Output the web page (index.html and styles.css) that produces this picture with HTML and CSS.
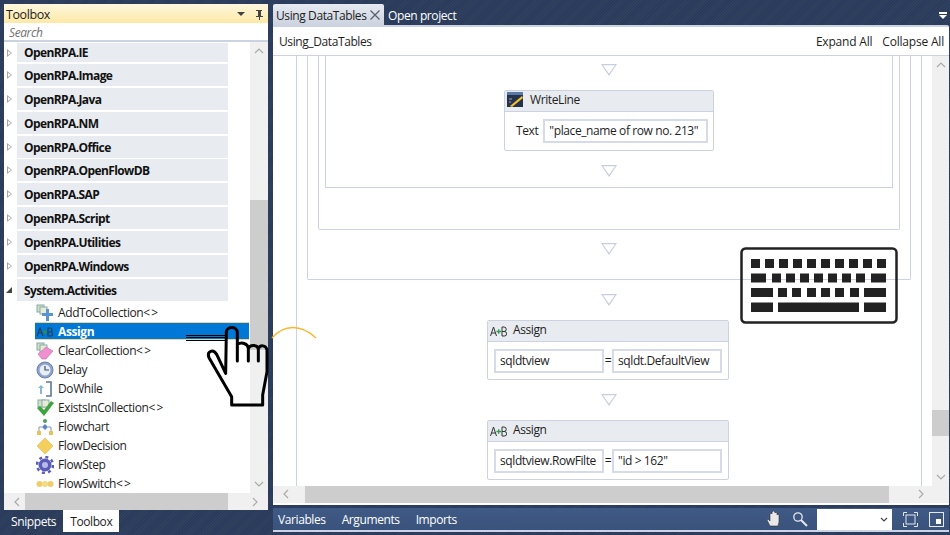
FILE: index.html
```html
<!DOCTYPE html>
<html lang="en">

<head>
    <meta charset="UTF-8">
    <title>Using DataTables</title>
    <link rel="stylesheet" href="styles.css">
</head>

<body>
    <div class="app">
        <!-- toolbox side -->
        <div class="left">
            <div class="toolbox">
                <div class="toolbox-title">
                    <span>Toolbox</span>
                    <svg class="title-icons" width="28" height="12" viewBox="0 0 28 12">
                        <path d="M0 3h8l-4 4z" fill="#444"/>
                        <path d="M19 1h6v1h-1v5h2v1h-3v3h-1v-3h-3v-1h2v-5h-2z" fill="#444"/>
                    </svg>
                </div>
                <div class="search">Search</div>
                <div class="tree-wrap">
                    <div class="tree">
                        <div class="cat"><i class="arrow"></i><b>OpenRPA.IE</b></div>
                        <div class="cat"><i class="arrow"></i><b>OpenRPA.Image</b></div>
                        <div class="cat"><i class="arrow"></i><b>OpenRPA.Java</b></div>
                        <div class="cat"><i class="arrow"></i><b>OpenRPA.NM</b></div>
                        <div class="cat"><i class="arrow"></i><b>OpenRPA.Office</b></div>
                        <div class="cat"><i class="arrow"></i><b>OpenRPA.OpenFlowDB</b></div>
                        <div class="cat"><i class="arrow"></i><b>OpenRPA.SAP</b></div>
                        <div class="cat"><i class="arrow"></i><b>OpenRPA.Script</b></div>
                        <div class="cat"><i class="arrow"></i><b>OpenRPA.Utilities</b></div>
                        <div class="cat"><i class="arrow"></i><b>OpenRPA.Windows</b></div>
                        <div class="cat"><i class="arrow open"></i><b>System.Activities</b></div>
                        <ul class="items">
                            <li>
                                <svg width="18" height="18" viewBox="0 0 18 18"><rect x="1" y="1" width="7" height="7" fill="#cfe3c4" stroke="#8aa"/><rect x="4" y="3" width="7" height="7" fill="#e6edd2" stroke="#8aa"/><path d="M10 5h3v4h4v3h-4v5h-3v-5H6V9h4z" fill="#5b93d3"/></svg>
                                <span>AddToCollection&lt;&thinsp;&gt;</span>
                            </li>
                            <li class="selected">
                                <svg width="18" height="14" viewBox="0 0 18 14"><path d="M1 11l3-8 3 8M2.200 8h3.600M12 3v8h2.500a2 2 0 0 0 0-4H12h2a2 2 0 0 0 0-4z" fill="none" stroke="#2a3f56" stroke-width="1.200"/><path d="M7 7h4M9 5v4" stroke="#2d8f4a" stroke-width="1.400"/></svg>
                                <span>Assign</span>
                            </li>
                            <li>
                                <svg width="18" height="18" viewBox="0 0 18 18"><rect x="1" y="1" width="7" height="7" fill="#cfe3c4" stroke="#8aa"/><rect x="4" y="3" width="7" height="7" fill="#e6edd2" stroke="#8aa"/><path d="M2 12l8-7 7 4-7 8H6z" fill="#ee8fd0" stroke="#c46aa8" stroke-width=".6"/></svg>
                                <span>ClearCollection&lt;&thinsp;&gt;</span>
                            </li>
                            <li>
                                <svg width="18" height="18" viewBox="0 0 18 18"><circle cx="9" cy="9" r="8" fill="#8aa3cf" stroke="#6b82aa"/><circle cx="9" cy="9" r="5.500" fill="#e8edf5"/><path d="M9 5v4h4" fill="none" stroke="#3d4f70" stroke-width="1.200"/></svg>
                                <span>Delay</span>
                            </li>
                            <li>
                                <svg width="18" height="18" viewBox="0 0 18 18"><path d="M10 2h5v14h-5" fill="none" stroke="#5f7596" stroke-width="1.600"/><path d="M5 5l3 3H6v6H4V8H2z" fill="#8cb8d8"/></svg>
                                <span>DoWhile</span>
                            </li>
                            <li>
                                <svg width="18" height="18" viewBox="0 0 18 18"><rect x="2" y="1" width="7" height="7" fill="#cfe3c4" stroke="#8aa"/><rect x="6" y="1" width="7" height="7" fill="#e6edd2" stroke="#8aa"/><path d="M1 9l3-2 4 4 7-9 3 2-10 13z" fill="#3fa33f"/></svg>
                                <span>ExistsInCollection&lt;&thinsp;&gt;</span>
                            </li>
                            <li>
                                <svg width="18" height="18" viewBox="0 0 18 18"><circle cx="9" cy="3" r="2" fill="#4aa05a"/><path d="M9 6l3 3-3 3-3-3z" fill="#5d86c6"/><path d="M3 13v-4h3M15 13v-4h-3" fill="none" stroke="#8899aa"/><rect x="1" y="13" width="4" height="4" fill="#e6c35a"/><rect x="13" y="13" width="4" height="4" fill="#e6c35a"/></svg>
                                <span>Flowchart</span>
                            </li>
                            <li>
                                <svg width="18" height="18" viewBox="0 0 18 18"><path d="M9 1l8 8-8 8-8-8z" fill="#f5cf5e" stroke="#e0b84a" stroke-width=".6"/></svg>
                                <span>FlowDecision</span>
                            </li>
                            <li>
                                <svg width="18" height="18" viewBox="0 0 18 18"><circle cx="9" cy="9" r="6.500" fill="#5a5db8"/><circle cx="9" cy="9" r="8" fill="none" stroke="#5a5db8" stroke-width="2.500" stroke-dasharray="3 3.300"/><circle cx="9" cy="9" r="3" fill="#b8bbea"/></svg>
                                <span>FlowStep</span>
                            </li>
                            <li>
                                <svg width="18" height="18" viewBox="0 0 18 18"><circle cx="3.500" cy="9" r="3" fill="#f0cd6a"/><circle cx="9" cy="9" r="3" fill="#f5da84"/><circle cx="14.500" cy="9" r="3" fill="#f0cd6a"/></svg>
                                <span>FlowSwitch&lt;&thinsp;&gt;</span>
                            </li>
                        </ul>
                    </div>
                    <div class="vscroll tree-scroll">
                        <svg class="chev" width="10" height="6" viewBox="0 0 10 6"><path d="M1 5l4-4 4 4" fill="none" stroke="#aaa" stroke-width="1.200"/></svg>
                        <div class="vthumb"></div>
                        <svg class="chev" width="10" height="6" viewBox="0 0 10 6"><path d="M1 1l4 4 4-4" fill="none" stroke="#aaa" stroke-width="1.200"/></svg>
                    </div>
                </div>
                <div class="hscroll tree-h">
                    <svg class="chev" width="6" height="10" viewBox="0 0 6 10"><path d="M5 1L1 5l4 4" fill="none" stroke="#aaa" stroke-width="1.200"/></svg>
                    <div class="hthumb"></div>
                    <svg class="chev" width="6" height="10" viewBox="0 0 6 10"><path d="M1 1l4 4-4 4" fill="none" stroke="#aaa" stroke-width="1.200"/></svg>
                </div>
            </div>
            <div class="side-tabs">
                <span class="side-tab">Snippets</span>
                <span class="side-tab active">Toolbox</span>
            </div>
        </div>

        <!-- designer side -->
        <div class="right">
            <div class="doc-tabs">
                <div class="doc-tab active">Using DataTables
                    <svg width="12" height="12" viewBox="0 0 12 12"><path d="M1.500 1.500l9 9M10.500 1.500l-9 9" stroke="#5a6270" stroke-width="1.300"/></svg>
                </div>
                <div class="doc-tab">Open project</div>
                <svg class="tab-menu" width="10" height="10" viewBox="0 0 10 10"><path d="M1 1h8v2H1zM1 4h8L5 8z" fill="#fff"/></svg>
            </div>
            <div class="designer">
                <div class="breadcrumb">
                    <span>Using_DataTables</span>
                    <div class="expand"><span>Expand All</span><span>Collapse All</span></div>
                </div>
                <div class="canvas-row">
                    <div class="canvas">
                        <div class="box box1">
                            <div class="box box2">
                                <div class="box box3">
                                    <div class="box box4">
                                        <i class="drop"></i>
                                        <div class="card write">
                                            <div class="card-head">
                                                <svg width="17" height="17" viewBox="0 0 17 17"><rect x="0" y="1" width="16" height="15" fill="#26324a"/><path d="M0 1h16v3H0z" fill="#5a78a8"/><path d="M3 15L15 5l1 2L5 16z" fill="#f2c230"/><path d="M2 8h3M2 11h2" stroke="#9ab" stroke-width="1"/></svg>
                                                <span>WriteLine</span>
                                            </div>
                                            <div class="card-body">
                                                <span>Text</span>
                                                <div class="field wide">"place_name of row no. 213"</div>
                                            </div>
                                        </div>
                                        <i class="drop last"></i>
                                    </div>
                                </div>
                                <i class="drop mid"></i>
                            </div>
                            <i class="drop"></i>
                            <div class="card">
                                <div class="card-head">
                                    <svg class="ab" width="17" height="12" viewBox="0 0 17 12"><path d="M.5 11l3-9 3 9M1.600 8h3.800M12 2v9h2.400a2.200 2.200 0 0 0 0-4.500H12h2a2.200 2.200 0 0 0 0-4.500z" fill="none" stroke="#333" stroke-width="1"/><path d="M6.500 6.500h4.500M8.700 4.300v4.400" stroke="#2d9a4e" stroke-width="1.300"/></svg>
                                    <span>Assign</span>
                                </div>
                                <div class="card-body assign">
                                    <div class="field">sqldtview</div><span>=</span><div class="field">sqldt.DefaultView</div>
                                </div>
                            </div>
                            <i class="drop gap"></i>
                            <div class="card">
                                <div class="card-head">
                                    <svg class="ab" width="17" height="12" viewBox="0 0 17 12"><path d="M.5 11l3-9 3 9M1.600 8h3.800M12 2v9h2.400a2.200 2.200 0 0 0 0-4.500H12h2a2.200 2.200 0 0 0 0-4.500z" fill="none" stroke="#333" stroke-width="1"/><path d="M6.500 6.500h4.500M8.700 4.300v4.400" stroke="#2d9a4e" stroke-width="1.300"/></svg>
                                    <span>Assign</span>
                                </div>
                                <div class="card-body assign">
                                    <div class="field">sqldtview.RowFilte</div><span>=</span><div class="field">"id &gt; 162"</div>
                                </div>
                            </div>
                        </div>
                    </div>
                    <div class="vscroll canvas-scroll">
                        <svg class="chev" width="10" height="6" viewBox="0 0 10 6"><path d="M1 5l4-4 4 4" fill="none" stroke="#aaa" stroke-width="1.200"/></svg>
                        <div class="vthumb"></div>
                        <svg class="chev" width="10" height="6" viewBox="0 0 10 6"><path d="M1 1l4 4 4-4" fill="none" stroke="#aaa" stroke-width="1.200"/></svg>
                    </div>
                </div>
                <div class="hscroll canvas-h">
                    <svg class="chev" width="6" height="10" viewBox="0 0 6 10"><path d="M5 1L1 5l4 4" fill="none" stroke="#aaa" stroke-width="1.200"/></svg>
                    <div class="hthumb"></div>
                    <svg class="chev" width="6" height="10" viewBox="0 0 6 10"><path d="M1 1l4 4-4 4" fill="none" stroke="#aaa" stroke-width="1.200"/></svg>
                </div>
            </div>
            <div class="statusbar">
                <span>Variables</span>
                <span>Arguments</span>
                <span>Imports</span>
                <div class="status-tools">
                    <svg class="pan" width="16" height="16" viewBox="0 0 16 16"><path d="M4 15L1 9l1-1 2 2V3l1-1 1 1V1l1.500-1L9 1v1l1-1 1 1v2l1-1 1 1v7l-1 4z" fill="#e8e8e8" stroke="#333" stroke-width=".6"/></svg>
                    <svg width="16" height="16" viewBox="0 0 16 16"><circle cx="6" cy="6" r="4.200" fill="none" stroke="#e4e8f0" stroke-width="1.300"/><path d="M9 9l6 6" stroke="#e4e8f0" stroke-width="2"/></svg>
                    <div class="zoom-box">
                        <svg width="8" height="5" viewBox="0 0 8 5"><path d="M1 1l3 3 3-3" fill="none" stroke="#444" stroke-width="1.200"/></svg>
                    </div>
                    <svg class="fit" width="15" height="15" viewBox="0 0 15 15"><rect x="3" y="3" width="9" height="9" fill="none" stroke="#e4e8f0"/><path d="M.5 4V.5H4M11 .5h3.500V4M.5 11v3.500H4M11 14.500h3.500V11" fill="none" stroke="#e4e8f0"/></svg>
                    <svg class="fit" width="15" height="15" viewBox="0 0 15 15"><rect x=".5" y=".5" width="14" height="14" fill="none" stroke="#e4e8f0"/><rect x="7" y="7" width="5" height="5" fill="#fff"/></svg>
                </div>
            </div>
        </div>

        <!-- callouts drawn over the screen -->
        <div class="press-lines"></div>
        <svg class="hand" width="140" height="100" viewBox="0 0 420 300">
            <path d="M137 175L139 52C140 33 170 33 172 52V88C185 80 203 85 205 100C210 88 232 88 235 102C240 88 258 90 261 105V170L248 240V270H155V245L87 128C80 110 98 100 110 118L137 175M172 85V138M205 100V138M235 102V138" fill="none" stroke="#000" stroke-width="9" stroke-linejoin="round" stroke-linecap="round"/>
        </svg>
        <svg class="arc" width="46" height="14" viewBox="0 0 46 14">
            <path d="M1 12C13 -2 30 -2 45 12" fill="none" stroke="#fbb72c" stroke-width="1.300"/>
        </svg>
        <svg class="keyboard" width="158" height="77" viewBox="0 0 158 77" fill="#222">
            <rect x="1.500" y="1.500" width="155" height="74" rx="4" fill="none" stroke="#222" stroke-width="2.500"/>
            <path d="M11 12h9v9h-9zM25 12h9v9h-9zM39 12h9v9h-9zM53 12h9v9h-9zM67 12h9v9h-9zM81 12h9v9h-9zM95 12h9v9h-9zM109 12h9v9h-9zM123 12h9v9h-9zM137 12h9v9h-9z"/>
            <path d="M11 26.500h15v9H11zM32 26.500h9v9h-9zM46 26.500h9v9h-9zM60 26.500h9v9h-9zM74 26.500h9v9h-9zM88 26.500h9v9h-9zM102 26.500h9v9h-9zM116 26.500h9v9h-9zM131 26.500h15v9h-15z"/>
            <path d="M11 41h22v9H11zM38 41h9v9h-9zM52 41h9v9h-9zM67 41h9v9h-9zM81 41h9v9h-9zM95 41h9v9h-9zM110 41h9v9h-9zM124 41h22v9h-22z"/>
            <path d="M11 55.500h22v9.500H11zM38 55.500h81v9.500H38zM124 55.500h22v9.500h-22z"/>
        </svg>
    </div>
</body>

</html>
```

FILE: styles.css
```css
* {
    box-sizing: border-box;
}

body {
    margin: 0;
    font-family: "Open Sans", "Noto Sans", sans-serif;
    font-size: 12px;
    letter-spacing: -0.4px;
    color: #1e1e1e;
    background-color: #2b3b5c;
}

.app {
    position: relative;
    display: flex;
    width: 950px;
    height: 535px;
    padding: 4px 1px 3px 4px;
    gap: 5px;
    overflow: hidden;
    background: repeating-linear-gradient(135deg, #2a3a5a 0, #2a3a5a 1px, #30405f 1px, #30405f 2px);
}

/* toolbox */
.left {
    display: flex;
    flex-direction: column;
    width: 264px;
}

.toolbox {
    display: flex;
    flex-direction: column;
    height: 506px;
    background-color: #fff;
    border-radius: 2px 2px 0 0;
}

.toolbox-title {
    display: flex;
    align-items: center;
    justify-content: space-between;
    height: 19px;
    padding: 2px 3px 0 2px;
    font-size: 12.500px;
    background: linear-gradient(#fdf7df, #fde9a6);
}

.search {
    height: 18px;
    margin-top: 1px;
    padding: 1px 5px 0;
    line-height: 16px;
    font-style: italic;
    color: #717171;
    border-bottom: 2px solid #ccd2e0;
}

.tree-wrap {
    display: flex;
    height: 451px;
}

.tree {
    flex: 1;
    padding-top: 1px;
    overflow: hidden;
}

.cat {
    display: flex;
    align-items: center;
    height: 22px;
    margin: 0 0 2px 13px;
    width: 211px;
    padding-left: 7px;
    position: relative;
    background-color: #e8ebef;
}

.cat:first-child {
    height: 19px;
    padding-bottom: 1px;
}

/* the list is one pixel short here in the real control */
.cat:nth-child(5) {
    margin-bottom: 1px;
}

.cat b {
    font-weight: 700;
    letter-spacing: -0.6px;
    color: #111;
}

.arrow {
    position: absolute;
    left: -10px;
    top: 50%;
    margin-top: -4px;
    border-left: 5px solid #a6a6a6;
    border-top: 4px solid transparent;
    border-bottom: 4px solid transparent;
}

/* white centre makes the closed arrow hollow */
.arrow::after {
    content: "";
    position: absolute;
    left: -4px;
    top: -2px;
    border-left: 3px solid #fff;
    border-top: 2px solid transparent;
    border-bottom: 2px solid transparent;
}

.arrow.open {
    left: -11px;
    margin-top: -3px;
    border: 0;
    border-right: 6px solid #444;
    border-top: 6px solid transparent;
}

.arrow.open::after {
    display: none;
}

.items {
    margin: 0;
    padding: 0 0 0 31px;
    list-style: none;
}

.items li {
    display: flex;
    align-items: center;
    gap: 4px;
    height: 19px;
    padding-left: 1px;
}

.items li svg {
    flex: none;
    width: 18px;
}

.items li.selected {
    height: 18px;
    margin-bottom: 1px;
    margin-right: 1px;
    padding-top: 1px;
    color: #fff;
    font-weight: 700;
    background-color: #0078d7;
    border: 1px solid #f2d58b;
    border-width: 1px 0;
}

/* scrollbars */
.vscroll {
    display: flex;
    flex-direction: column;
    align-items: center;
    width: 18px;
    background-color: #f0f0f0;
    position: relative;
}

.hscroll {
    display: flex;
    align-items: center;
    height: 17px;
    background-color: #f0f0f0;
}

.vscroll .chev:first-child {
    margin-top: 6px;
}

.vscroll .chev:last-child {
    position: absolute;
    bottom: 6px;
}

.vthumb {
    position: absolute;
    left: 0;
    width: 100%;
    background-color: #cdcdcd;
}

.tree-scroll .vthumb {
    top: 158px;
    height: 150px;
}

.canvas-scroll .vthumb {
    top: 354px;
    height: 26px;
}

.hthumb {
    height: 100%;
    background-color: #cdcdcd;
}

.tree-h {
    justify-content: space-between;
    padding: 0 10px;
    height: 17px;
}

.tree-h .hthumb {
    width: 203px;
    margin-left: -1px;
    margin-right: 18px;
}

.side-tabs {
    display: flex;
    align-items: center;
    height: 22px;
    color: #fff;
}

.side-tab {
    height: 22px;
    padding: 3px 7px;
}

.side-tab.active {
    color: #1e1e1e;
    background-color: #fff;
}

/* designer */
.right {
    flex: 1;
    display: flex;
    flex-direction: column;
    min-width: 0;
}

.doc-tabs {
    display: flex;
    height: 21px;
    color: #fff;
    position: relative;
}

.doc-tab {
    display: flex;
    align-items: center;
    gap: 2px;
    padding: 2px 3px 0;
    white-space: nowrap;
}

.doc-tab.active {
    width: 111px;
    margin-right: 1px;
    color: #1e1e1e;
    background: linear-gradient(#e6eaf1, #ccd3e0);
    border-radius: 2px 2px 0 0;
}

.tab-menu {
    position: absolute;
    right: 1px;
    top: 7px;
}

.designer {
    height: 481px;
    background-color: #fff;
    border-top: 2px solid #ccd3e0;
    border-radius: 0 2px 0 0;
}

.breadcrumb {
    display: flex;
    align-items: center;
    justify-content: space-between;
    height: 29px;
    padding: 2px 5px 0 6px;
    border-bottom: 1px solid #ccd2e0;
}

.expand {
    display: flex;
    gap: 10px;
    letter-spacing: -0.2px;
}

.canvas-row {
    display: flex;
    height: 430px;
}

.canvas {
    flex: 1;
    padding: 0 10px 0 23px;
    overflow: hidden;
}

.canvas-scroll {
    width: 17px;
}

.box {
    display: flex;
    flex-direction: column;
    align-items: center;
    border: 1px solid #ccd2e6;
    border-top: 0;
}

.box1 {
    height: 430px;
    padding: 0 10px;
    border-bottom: 0;
}

.box2 {
    width: 604px;
    height: 224px;
    padding: 0 10px;
    border-radius: 0 0 2px 2px;
}

.box3 {
    width: 582px;
    height: 174px;
    padding: 0 6px;
    flex: none;
    border-radius: 0 0 2px 2px;
}

.box4 {
    width: 568px;
    height: 132px;
    flex: none;
}

.drop {
    flex: none;
    width: 16px;
    height: 12px;
    margin-top: 14px;
    position: relative;
    clip-path: polygon(0 0, 100% 0, 50% 100%);
    background-color: #c5cede;
}

.drop::after {
    content: "";
    position: absolute;
    left: 2px;
    top: 1.300px;
    width: 12px;
    height: 8.500px;
    clip-path: polygon(0 0, 100% 0, 50% 100%);
    background-color: #fff;
}

.box4 .drop:first-child {
    margin-top: 8px;
}

.drop.mid {
    margin-top: 13px;
}

.card {
    flex: none;
    width: 242px;
    height: 60px;
    margin-top: 14px;
    margin-right: 2px;
    border: 1px solid #ccd2e0;
    border-radius: 2px;
    background-color: #fff;
}

.card.write {
    width: 210px;
    height: 61px;
    margin-right: 0;
}

.card-head {
    display: flex;
    align-items: center;
    gap: 6px;
    height: 21px;
    padding: 0 0 2px 2px;
    background-color: #e8ebef;
    border-bottom: 1px solid #ccd2e0;
}

.card-head .ab {
    margin-top: 3px;
}

.card-body {
    display: flex;
    align-items: center;
    height: 38px;
    padding: 0 6px 0 11px;
    gap: 5px;
}

.card-body.assign {
    justify-content: space-between;
    padding: 0 6px;
    gap: 0;
}

.field {
    flex: none;
    width: 110px;
    height: 24px;
    padding: 0 4px;
    line-height: 19px;
    white-space: nowrap;
    overflow: hidden;
    border: 2px solid #d5dbe8;
    background-color: #fff;
}

.field.wide {
    width: 165px;
}

.canvas-h {
    height: 17px;
    padding-left: 10px;
}

.canvas-h .hthumb {
    width: 584px;
    margin-left: 16px;
}

.canvas-h .chev:last-child {
    margin-left: 29px;
}

.statusbar {
    display: flex;
    align-items: center;
    gap: 16px;
    height: 24px;
    margin-top: 3px;
    padding: 0 5px;
    color: #fff;
    background: linear-gradient(#3f5a86, #3a537c);
    border-bottom: 2px solid #ccd3e6;
}

.status-tools {
    display: flex;
    align-items: center;
    gap: 9px;
    margin-left: auto;
}

.pan {
    margin-right: 1px;
}

.fit {
    margin-left: 2px;
}

.zoom-box {
    display: flex;
    align-items: center;
    justify-content: flex-end;
    width: 75px;
    height: 21px;
    padding-right: 4px;
    background-color: #fff;
}

/* overlays */
.press-lines {
    position: absolute;
    left: 186px;
    top: 335px;
    width: 40px;
    height: 6px;
    border-top: 1px solid #000;
    border-bottom: 1px solid #000;
}

.press-lines::after {
    content: "";
    display: block;
    height: 1px;
    margin-top: 1px;
    background-color: #000;
}

.hand {
    position: absolute;
    left: 180px;
    top: 315px;
}

.arc {
    position: absolute;
    left: 271px;
    top: 326px;
}

.keyboard {
    position: absolute;
    left: 740px;
    top: 247px;
}
```
